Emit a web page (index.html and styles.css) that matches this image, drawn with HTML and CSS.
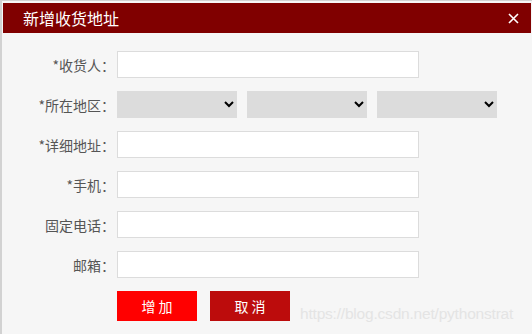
FILE: index.html
```html
<!DOCTYPE html>
<html lang="zh">
<head>
    <meta charset="UTF-8">
    <title>新增收货地址</title>
    <link rel="stylesheet" href="styles.css">
</head>
<body>
<div class="dialog">
    <div class="dialog-header">
        <span class="dialog-title">新增收货地址</span>
        <span class="close-btn">
            <svg width="11" height="11" viewBox="0 0 11 11"><path d="M1 1L10 10M10 1L1 10" stroke="#fff" stroke-width="1.6"/></svg>
        </span>
    </div>
    <form class="address-form">
        <div class="form-row">
            <label>*收货人：</label>
            <input type="text" class="text-input">
        </div>
        <div class="form-row">
            <label>*所在地区：</label>
            <div class="select-group">
                <select class="area-select"></select>
                <select class="area-select"></select>
                <select class="area-select"></select>
            </div>
        </div>
        <div class="form-row">
            <label>*详细地址：</label>
            <input type="text" class="text-input">
        </div>
        <div class="form-row">
            <label>*手机：</label>
            <input type="text" class="text-input">
        </div>
        <div class="form-row">
            <label>固定电话：</label>
            <input type="text" class="text-input">
        </div>
        <div class="form-row">
            <label>邮箱：</label>
            <input type="text" class="text-input">
        </div>
        <div class="button-row">
            <button type="button" class="btn btn-add">增 加</button>
            <button type="button" class="btn btn-cancel">取 消</button>
            <span class="watermark">https://blog.csdn.net/pythonstrat</span>
        </div>
    </form>
</div>
</body>
</html>
```

FILE: styles.css
```css
html, body {
    margin: 0;
    padding: 0;
    background: #f6f6f6;
}
body {
    font-family: "Noto Sans CJK SC", "Liberation Sans", sans-serif;
}
.dialog {
    width: 532px;
    height: 334px;
    box-sizing: border-box;
    border-top: 1px solid #d2d2d2;
    border-left: 2px solid #d2d2d2;
    padding: 2px 1px 0 1px;
    background: #f6f6f6;
    overflow: hidden;
}
.dialog-header {
    height: 30px;
    background: #800000;
    display: flex;
    align-items: center;
    justify-content: space-between;
    padding: 0 12px 0 20px;
}
.dialog-title {
    color: #fff;
    font-size: 16px;
    line-height: 30px;
}
.close-btn {
    display: flex;
    align-items: center;
}
.address-form {
    padding-top: 18px;
}
.form-row {
    display: flex;
    align-items: center;
    height: 27px;
    margin-bottom: 13px;
}
.form-row label {
    width: 112px;
    text-align: right;
    font-size: 14px;
    color: #555;
    margin-right: 2px;
}
.text-input {
    width: 302px;
    height: 27px;
    box-sizing: border-box;
    border: 1px solid #dcdcdc;
    background: #fff;
    margin: 0;
    padding: 0 5px;
}
.select-group {
    display: flex;
    gap: 10px;
}
.area-select {
    width: 120px;
    height: 27px;
    border: none;
    background: #dcdcdc;
    margin: 0;
}
.button-row {
    display: flex;
    align-items: center;
    padding-left: 114px;
    margin-top: 3px;
    position: relative;
}
.btn {
    width: 80px;
    height: 30px;
    border: none;
    color: #fff;
    font-size: 14px;
    font-family: "Noto Sans CJK SC", sans-serif;
    margin-right: 13px;
    padding: 0;
}
.btn-add {
    background: #ff0000;
}
.btn-cancel {
    background: #bc0c0c;
}
.watermark {
    position: absolute;
    left: 297px;
    top: 14px;
    font-family: "Liberation Sans", Arial, sans-serif;
    font-size: 15.5px;
    letter-spacing: -0.2px;
    color: #e4e4e4;
    white-space: nowrap;
}
```
